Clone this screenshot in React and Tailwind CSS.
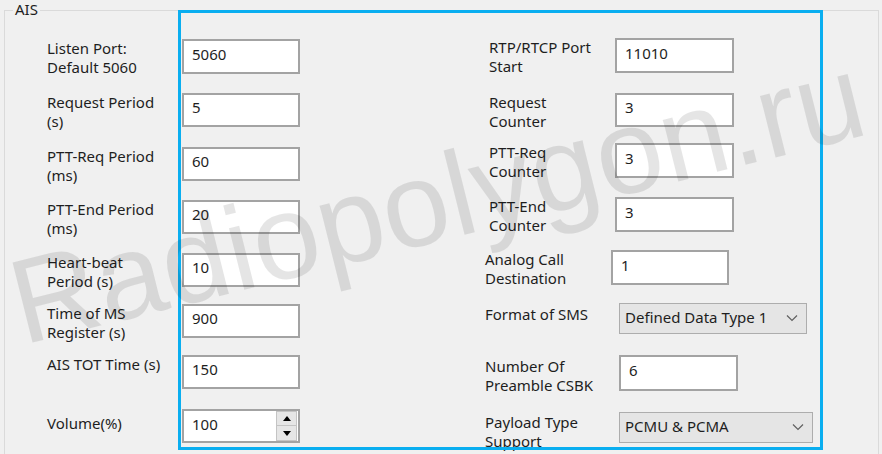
import React from 'react'

const leftRows = [
  { label: ['Listen Port:', 'Default 5060'], value: '5060', row: 'mt-[28px] h-[35px]' },
  { label: ['Request Period', '(s)'], value: '5', row: 'mt-[19px] h-[34px]' },
  { label: ['PTT-Req Period', '(ms)'], value: '60', row: 'mt-[20px] h-[34px]' },
  { label: ['PTT-End Period', '(ms)'], value: '20', row: 'mt-[19px] h-[34px]' },
  { label: ['Heart-beat', 'Period (s)'], value: '10', row: 'mt-[19px] h-[34px]' },
  { label: ['Time of MS', 'Register (s)'], value: '900', row: 'mt-[17px] h-[34px]' },
  { label: ['AIS TOT Time (s)'], value: '150', row: 'mt-[17px] h-[34px]' },
]

const rightRows = [
  { label: ['RTP/RTCP Port', 'Start'], value: '11010', row: 'mt-[27px] h-[35px]', lab: 'w-[130px] pl-[4px]', box: 'w-[119px]' },
  { label: ['Request', 'Counter'], value: '3', row: 'mt-[20px] h-[34px]', lab: 'w-[130px] pl-[4px]', box: 'w-[119px]' },
  { label: ['PTT-Req', 'Counter'], value: '3', row: 'mt-[16px] h-[35px]', lab: 'w-[130px] pl-[4px]', box: 'w-[119px]' },
  { label: ['PTT-End', 'Counter'], value: '3', row: 'mt-[19px] h-[35px]', lab: 'w-[130px] pl-[4px]', box: 'w-[119px]' },
  { label: ['Analog Call', 'Destination'], value: '1', row: 'mt-[18px] h-[35px]', lab: 'w-[126px]', box: 'w-[118px]' },
]

function Field({ value, className }) {
  return (
    <input
      readOnly
      value={value}
      className={`h-full border-2 border-[#a3a3a3] bg-white pl-[8px] pb-[6px] text-[15px] text-[#1e1e1e] outline-none ${className}`}
    />
  )
}

function Label({ lines, className }) {
  return (
    <div className={`text-[15px] leading-[19px] text-[#1e1e1e] shrink-0 ${className}`}>
      {lines.map((l) => (
        <div key={l} className="whitespace-nowrap">{l}</div>
      ))}
    </div>
  )
}

function Chevron() {
  return (
    <svg width="12" height="8" viewBox="0 0 12 8" fill="none" stroke="#606060" strokeWidth="1.2">
      <path d="M1 1.5l5 5 5-5" />
    </svg>
  )
}

function Select({ value, className }) {
  return (
    <div className={`flex h-full items-center justify-between border-[1.5px] border-[#adadad] bg-[#e5e5e5] pl-[5px] pr-[8px] pb-[2px] text-[15px] text-[#1e1e1e] ${className}`}>
      <span className="whitespace-nowrap">{value}</span>
      <Chevron />
    </div>
  )
}

function Spin() {
  return (
    <div className="flex h-[34px] w-[118px] border-2 border-[#a3a3a3] bg-white">
      <input readOnly value="100" className="min-w-0 flex-1 pl-[8px] pb-[4px] text-[15px] text-[#1e1e1e] outline-none" />
      <div className="mr-[1px] flex w-[21px] flex-col">
        <div className="flex h-[15px] items-center justify-center border border-[#c4c4c4] bg-[#e6e6e6]">
          <div className="h-0 w-0 border-x-[4px] border-b-[5px] border-x-transparent border-b-black" />
        </div>
        <div className="flex h-[15px] items-center justify-center border border-t-0 border-[#c4c4c4] bg-[#e6e6e6]">
          <div className="h-0 w-0 border-x-[4px] border-t-[5px] border-x-transparent border-t-black" />
        </div>
      </div>
    </div>
  )
}

export default function App() {
  return (
    <div className="relative h-[454px] w-[882px] overflow-hidden bg-[#f0f0f0] pl-[4px] pt-[10px] font-['Noto_Sans',sans-serif]">
      {/* AIS group box */}
      <div className="relative flex h-[444px] w-[875px] border border-b-0 border-[#dadada]">
        <span className="absolute left-[8px] top-[-11px] bg-[#f0f0f0] px-[2px] text-[15px] leading-[19px] text-[#1e1e1e]">AIS</span>

        {/* left column */}
        <div className="flex flex-col pl-[42px]">
          {leftRows.map((r) => (
            <div key={r.value} className={`flex items-start ${r.row}`}>
              <Label lines={r.label} className="w-[135px]" />
              <Field value={r.value} className="w-[118px]" />
            </div>
          ))}
          <div className="mt-[20px] flex h-[34px] items-start">
            <Label lines={['Volume(%)']} className="w-[135px] pt-[5px]" />
            <Spin />
          </div>
        </div>

        {/* right column */}
        <div className="ml-[185px] flex flex-col">
          {rightRows.map((r) => (
            <div key={r.label[0]} className={`flex items-start ${r.row}`}>
              <Label lines={r.label} className={r.lab} />
              <Field value={r.value} className={r.box} />
            </div>
          ))}
          <div className="mt-[18px] flex h-[31px] items-start">
            <Label lines={['Format of SMS']} className="w-[134px] pt-[2px]" />
            <Select value="Defined Data Type 1" className="w-[188px]" />
          </div>
          <div className="mt-[21px] flex h-[36px] items-start">
            <Label lines={['Number Of', 'Preamble CSBK']} className="w-[134px] pt-[2px]" />
            <Field value="6" className="w-[119px]" />
          </div>
          <div className="mt-[21px] flex h-[31px] items-start">
            <Label lines={['Payload Type', 'Support']} className="w-[134px] pt-[1px]" />
            <Select value="PCMU & PCMA" className="w-[194px]" />
          </div>
        </div>
      </div>

      {/* highlight frame */}
      <div className="pointer-events-none absolute left-[178px] top-[10px] h-[440px] w-[645px] border-[3px] border-[#0aaef0]" />

      {/* watermark */}
      <div className="pointer-events-none absolute left-[23px] top-[243px] origin-[0_102px] rotate-[-14deg] whitespace-nowrap font-['Liberation_Sans',sans-serif] text-[120px] leading-none text-black/10">
        Radiopolygon.ru
      </div>
    </div>
  )
}
